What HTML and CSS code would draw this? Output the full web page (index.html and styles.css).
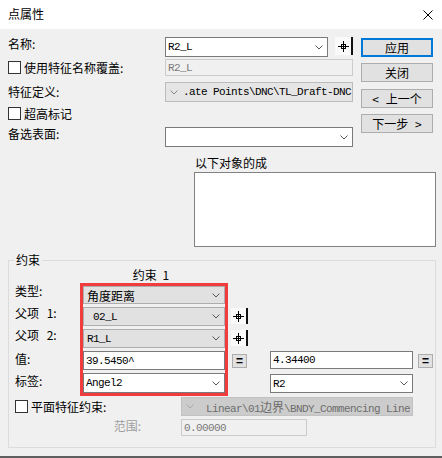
FILE: index.html
```html
<!DOCTYPE html>
<html lang="zh">
<head>
<meta charset="utf-8">
<title>点属性</title>
<link rel="stylesheet" href="styles.css">
</head>
<body>
<div class="window">
  <div class="titlebar">
    <span class="title">点属性</span>
    <svg class="close" width="10" height="10" viewBox="0 0 10 10"><path d="M0.5 0.5L9.5 9.5M9.5 0.5L0.5 9.5" stroke="#000" stroke-width="1"/></svg>
  </div>

  <div class="top">
    <div class="form">
      <div class="row r1">
        <span class="lab">名称:</span>
        <div class="combo white w163"><span class="val mono">R2_L</span><svg class="chev" width="8" height="5" viewBox="0 0 8 5"><path d="M0.5 0.5L4 4L7.5 0.5" fill="none" stroke="#555"/></svg></div>
        <div class="pin pin-top"><svg width="11" height="11" viewBox="0 0 11 11"><path d="M0 5.5H11M5.5 0V11" stroke="#000"/><rect x="3.5" y="3.5" width="4" height="4" fill="none" stroke="#000"/></svg></div>
      </div>
      <div class="row r2">
        <label class="chk lab"><span class="box"></span><span>使用特征名称覆盖:</span></label>
        <div class="field disabled w188"><span class="val mono">R2_L</span></div>
      </div>
      <div class="row r3">
        <span class="lab lab-mid">特征定义:</span>
        <div class="combo left feat w188"><svg class="chev chev-left" width="8" height="5" viewBox="0 0 8 5"><path d="M0.5 0.5L4 4L7.5 0.5" fill="none" stroke="#888"/></svg><span class="val mono">.ate Points\DNC\TL_Draft-DNC</span></div>
      </div>
      <div class="row r4">
        <label class="chk lab"><span class="box"></span><span>超高标记</span></label>
      </div>
      <div class="row r5">
        <span class="lab">备选表面:</span>
        <div class="combo white w188"><span class="val mono"></span><svg class="chev" width="8" height="5" viewBox="0 0 8 5"><path d="M0.5 0.5L4 4L7.5 0.5" fill="none" stroke="#555"/></svg></div>
      </div>
    </div>
    <div class="buttons">
      <div class="btn default">应用</div>
      <div class="btn">关闭</div>
      <div class="btn b3">&lt; 上一个</div>
      <div class="btn">下一步 &gt;</div>
    </div>
  </div>

  <div class="caption">以下对象的成</div>
  <div class="listbox"></div>

  <fieldset class="group">
    <legend>约束</legend>
    <div class="ctitle">约束 1</div>
    <div class="cgrid">
      <span class="glab g1">类型:</span>
      <span class="glab g2 up">父项 1:</span>
      <span class="glab g3 up">父项 2:</span>
      <span class="glab g4">值:</span>
      <span class="glab g5">标签:</span>

      <div class="redbox">
        <div class="combo gray h18"><span class="val"><span class="cjk">角度距离</span></span><svg class="chev" width="8" height="5" viewBox="0 0 8 5"><path d="M0.5 0.5L4 4L7.5 0.5" fill="none" stroke="#555"/></svg></div>
        <div class="combo gray h19"><span class="val mono pre"> 02_L</span><svg class="chev" width="8" height="5" viewBox="0 0 8 5"><path d="M0.5 0.5L4 4L7.5 0.5" fill="none" stroke="#555"/></svg></div>
        <div class="combo gray h19"><span class="val mono">R1_L</span><svg class="chev" width="8" height="5" viewBox="0 0 8 5"><path d="M0.5 0.5L4 4L7.5 0.5" fill="none" stroke="#555"/></svg></div>
        <div class="field white h19"><span class="val mono">39.5450^</span></div>
        <div class="combo white h20"><span class="val mono">Angel2</span><svg class="chev" width="8" height="5" viewBox="0 0 8 5"><path d="M0.5 0.5L4 4L7.5 0.5" fill="none" stroke="#555"/></svg></div>
      </div>

      <div class="pin pin-g p2"><svg width="11" height="11" viewBox="0 0 11 11"><path d="M0 5.5H11M5.5 0V11" stroke="#000"/><rect x="3.5" y="3.5" width="4" height="4" fill="none" stroke="#000"/></svg></div>
      <div class="pin pin-g p3"><svg width="11" height="11" viewBox="0 0 11 11"><path d="M0 5.5H11M5.5 0V11" stroke="#000"/><rect x="3.5" y="3.5" width="4" height="4" fill="none" stroke="#000"/></svg></div>
      <div class="eq eq1">=</div>
      <div class="field white val2"><span class="val mono">4.34400</span></div>
      <div class="eq eq2">=</div>
      <div class="combo white lab2"><span class="val mono">R2</span><svg class="chev" width="8" height="5" viewBox="0 0 8 5"><path d="M0.5 0.5L4 4L7.5 0.5" fill="none" stroke="#555"/></svg></div>
    </div>

    <div class="plane">
      <label class="chk pchk"><span class="box"></span><span>平面特征约束:</span></label>
      <div class="combo dis left w232"><svg class="chev chev-left" width="8" height="5" viewBox="0 0 8 5"><path d="M0.5 0.5L4 4L7.5 0.5" fill="none" stroke="#a8a8a8"/></svg><span class="val mono pre"> Linear\01<span class="cjk">边界</span>\BNDY_Commencing Line</span></div>
    </div>
    <div class="range">
      <span class="rlab">范围:</span>
      <div class="field disabled w126"><span class="val mono">0.00000</span></div>
    </div>
  </fieldset>
</div>
</body>
</html>
```

FILE: styles.css
```css
* { box-sizing: border-box; }
html, body { margin: 0; padding: 0; }
body {
  width: 442px;
  height: 458px;
  overflow: hidden;
  background: #f0f0f0;
  font-family: "Noto Sans CJK SC", "Microsoft YaHei", sans-serif;
  font-size: 12px;
  color: #000;
}
.window {
  height: 458px;
  border-bottom: 2px solid #5f5f5f;
}

/* title bar */
.titlebar {
  height: 29px;
  background: #fff;
  display: flex;
  align-items: center;
  justify-content: space-between;
  padding: 0 9px 0 8px;
}
.title { line-height: 14px; margin-bottom: 2px; }
.close { display: block; }

/* top area */
.top { display: flex; }
.form { margin-left: 8px; width: 345px; }
.row { display: flex; align-items: flex-start; }
.r1 { margin-top: 8px; height: 20px; }
.r2 { margin-top: 2px; height: 17px; align-items: center; }
.r3 { margin-top: 6px; height: 20px; align-items: center; }
.r4 { margin-top: 3px; height: 17px; align-items: center; }
.r5 { margin-top: 5px; height: 20px; }

.lab { width: 157px; flex: none; line-height: 14px; }
.lab-mid { line-height: 20px; }

.chk { display: flex; align-items: center; gap: 3px; line-height: 14px; }
.box {
  width: 13px;
  height: 13px;
  flex: none;
  border: 1px solid #333;
  background: #fff;
}

/* controls */
.combo, .field {
  display: flex;
  align-items: center;
  height: 100%;
  flex: none;
  overflow: hidden;
}
.combo { padding: 0 4px 0 2px; }
.field { padding: 0 2px; }
.val {
  flex: 1;
  min-width: 0;
  white-space: nowrap;
  overflow: hidden;
}
.pre { white-space: pre; }
.mono {
  font-family: "Liberation Mono", "Noto Sans CJK SC", monospace;
  font-size: 11px;
  letter-spacing: -0.6px;
}
.cjk {
  font-family: "Noto Sans CJK SC", sans-serif;
  font-size: 12px;
  letter-spacing: 0;
}
.chev { display: block; flex: none; }
.chev-left { margin-right: 6px; }

.white { background: #fff; border: 1px solid #7a7a7a; }
.gray { background: #e1e1e1; border: 1px solid #adadad; padding-left: 3px; }
.left { background: #e5e5e5; border: 1px solid #bcbcbc; padding: 0 2px 0 4px; }
.feat { padding-right: 0; }
.feat .chev-left { margin-right: 5px; }
.dis { background: #cccccc; border: 1px solid #c2c2c2; color: #6d6d6d; }
.disabled { background: #f0f0f0; border: 1px solid #cccccc; color: #7a7a7a; }

.w163 { width: 163px; }
.w188 { width: 188px; }
.w232 { width: 232px; height: 19px; }
.w126 { width: 126px; }
.h18 { height: 18px; }
.h19 { height: 19px; }
.h20 { height: 20px; }

.pin {
  display: flex;
  align-items: center;
  justify-content: center;
  background: #fafafa;
  border-right: 2px solid #111;
}
.pin svg { display: block; }
.pin-top { width: 18px; height: 18px; margin-left: 7px; }

/* buttons */
.buttons {
  margin-left: 8px;
  width: 72px;
  padding-top: 9px;
  display: flex;
  flex-direction: column;
  gap: 6px;
}
.btn {
  height: 19px;
  background: #e1e1e1;
  border: 1px solid #adadad;
  display: flex;
  align-items: center;
  justify-content: center;
  line-height: 14px;
  word-spacing: 4px;
}
.btn.default { border: 2px solid #0078d7; }
.b3 { margin-top: 1px; }

/* list */
.caption { margin: 9px 0 0 195px; line-height: 14px; }
.listbox {
  margin: 2px 0 0 194px;
  width: 242px;
  height: 75px;
  background: #fff;
  border: 1px solid #828282;
}

/* group box */
.group {
  margin: 6px 0 0 8px;
  width: 428px;
  padding: 0 0 11px 6px;
  border: 1px solid #dcdcdc;
  min-inline-size: 0;
}
.group legend {
  padding: 0 2px;
  margin-left: -1px;
  line-height: 14px;
}
.ctitle {
  margin: 1px 0 0 62px;
  width: 148px;
  text-align: center;
  line-height: 14px;
  word-spacing: 3px;
}
.cgrid {
  margin-top: 1px;
  display: grid;
  grid-template-columns: 65px 148px 20px 22px 143px 5px 15px;
  grid-template-rows: 24px 22px 22px 22px 23px;
}
.cgrid > * { align-self: start; }
.glab { grid-column: 1; line-height: 14px; margin-top: 1px; word-spacing: 5px; }
.glab.up { margin-top: -1px; }
.g1 { grid-row: 1; }
.g2 { grid-row: 2; }
.g3 { grid-row: 3; }
.g4 { grid-row: 4; }
.g5 { grid-row: 5; }

.redbox {
  grid-column: 2;
  grid-row: 1 / 6;
  border: 3px solid #f03c3c;
  display: flex;
  flex-direction: column;
  gap: 3px;
}
.redbox > * { width: 100%; }

.pin-g { grid-column: 3; width: 17px; height: 16px; margin: 1px 0 0 3px; }
.p2 { grid-row: 2; }
.p3 { grid-row: 3; }

.eq {
  width: 15px;
  height: 14px;
  margin-top: 3px;
  background: #e1e1e1;
  border: 1px solid #adadad;
  display: flex;
  align-items: center;
  justify-content: center;
  font-family: "Liberation Sans", sans-serif;
  font-weight: bold;
  font-size: 12px;
  line-height: 12px;
}
.eq1 { grid-column: 3; grid-row: 4; margin-left: 4px; }
.eq2 { grid-column: 7; grid-row: 4; }
.val2 { grid-column: 5; grid-row: 4; height: 18px; }
.lab2 { grid-column: 5; grid-row: 5; height: 19px; margin-top: 1px; }

.plane { display: flex; margin-top: 1px; height: 19px; }
.pchk { width: 166px; flex: none; }
.range { display: flex; margin-top: 3px; height: 17px; }
.rlab {
  width: 126px;
  margin-right: 40px;
  text-align: right;
  line-height: 14px;
  color: #a0a0a0;
  flex: none;
}
```
